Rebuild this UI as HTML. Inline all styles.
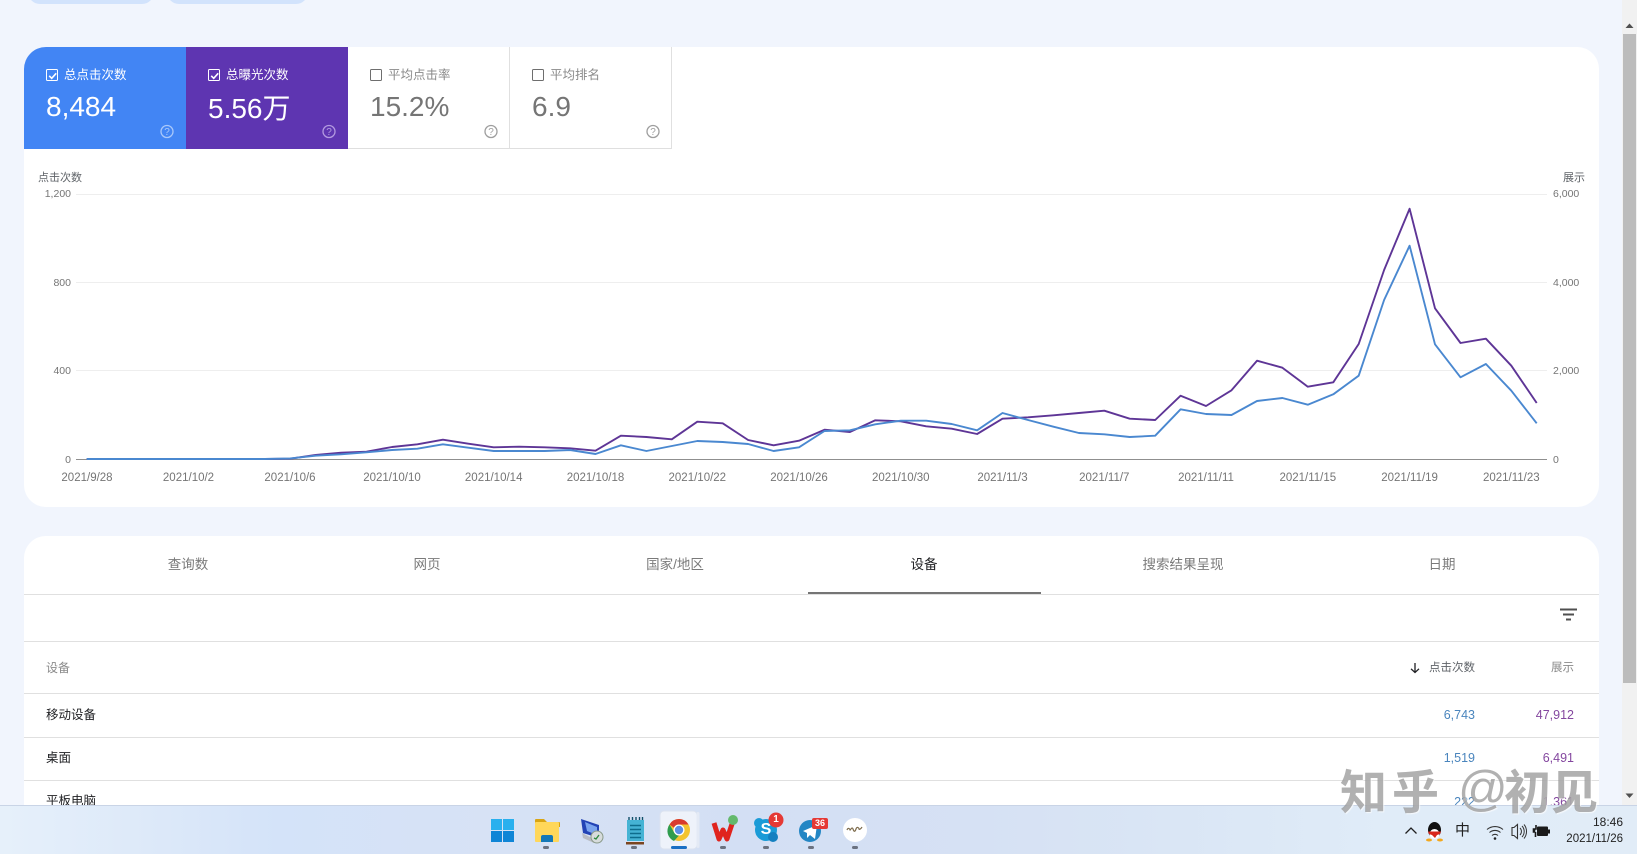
<!DOCTYPE html>
<html><head><meta charset="utf-8"><style>
html,body{margin:0;padding:0;width:1637px;height:854px;overflow:hidden;background:#f1f5fd}
body{position:relative;font-family:"Liberation Sans","Noto Sans CJK SC",sans-serif}
.a{position:absolute}
.t{position:absolute;white-space:nowrap;height:20px;line-height:20px}
.r{text-align:right}
.c{text-align:center;transform:translateX(-50%)}
.line{position:absolute;left:24px;width:1575px;height:1px;background:#e0e0e0}
.ax{font-size:10.5px;color:#757575}
.dt{font-size:11.5px;color:#757575}
.lb{font-size:12.5px}
.num{font-size:28px;height:34px;line-height:34px}
.cb{position:absolute;width:10px;height:10px;border-radius:1.5px;border:1.5px solid #fff;top:69px}
.tab{font-size:13.5px;color:#7a7a7a;top:555px}
.row{font-size:12.5px;color:#202124}
.bl{font-size:12.5px;color:#4a85bd}
.pu{font-size:12.5px;color:#84479f}
.wm{position:absolute;white-space:nowrap;height:52px;line-height:52px;top:763px;font-size:47px;font-weight:700;color:rgba(140,140,140,.68);text-shadow:1px 1px 1px rgba(255,255,255,.7);font-family:'Noto Sans CJK SC',sans-serif}
</style></head><body>

<div class="a" style="left:28px;top:-20px;width:126px;height:24px;border-radius:12px;background:#d2e3fc"></div>
<div class="a" style="left:167px;top:-20px;width:141px;height:24px;border-radius:12px;background:#d2e3fc"></div>

<!-- chart card -->
<div class="a" style="left:24px;top:47px;width:1575px;height:460px;background:#fff;border-radius:22px;overflow:hidden">
  <div class="a" style="left:0;top:0;width:162px;height:102px;background:#4285f4"></div>
  <div class="a" style="left:162px;top:0;width:162px;height:102px;background:#5e35b1"></div>
  <div class="a" style="left:324px;top:0;width:323px;border-bottom:1px solid #dfdfdf;height:101px"></div>
  <div class="a" style="left:485px;top:0;width:1px;height:102px;background:#e0e0e0"></div>
  <div class="a" style="left:647px;top:0;width:1px;height:102px;background:#e0e0e0"></div>
</div>

<!-- tiles content -->
<div class="cb" style="left:46px;border-color:#fff"></div>
<svg class="a" style="left:46px;top:69px" width="14" height="14"><path d="M3.2 6.800l2.500 2.500 4.500-5" fill="none" stroke="#fff" stroke-width="1.600"/></svg>
<div class="t lb" style="left:64px;top:65px;color:#fff">总点击次数</div>
<div class="t num" style="left:46px;top:90px;color:#fff">8,484</div>

<div class="cb" style="left:208px"></div>
<svg class="a" style="left:208px;top:69px" width="14" height="14"><path d="M3.2 6.800l2.500 2.500 4.500-5" fill="none" stroke="#fff" stroke-width="1.600"/></svg>
<div class="t lb" style="left:226px;top:65px;color:#fff">总曝光次数</div>
<div class="t num" style="left:208px;top:92px;color:#fff">5.56万</div>

<div class="cb" style="left:370px;border-color:#6e6e6e"></div>
<div class="t lb" style="left:388px;top:65px;color:#8a8a8a">平均点击率</div>
<div class="t num" style="left:370px;top:90px;color:#757575">15.2%</div>

<div class="cb" style="left:532px;border-color:#6e6e6e"></div>
<div class="t lb" style="left:550px;top:65px;color:#8a8a8a">平均排名</div>
<div class="t num" style="left:532px;top:90px;color:#757575">6.9</div>

<!-- help icons -->
<svg class="a" style="left:159px;top:123.500px" width="16" height="15"><circle cx="8" cy="7.500" r="6" fill="none" stroke="#a9c8fa" stroke-width="1.300"/><text x="8" y="11" font-size="10" text-anchor="middle" fill="#a9c8fa" font-family="Liberation Sans">?</text></svg>
<svg class="a" style="left:321px;top:123.500px" width="16" height="15"><circle cx="8" cy="7.500" r="6" fill="none" stroke="#b39ae0" stroke-width="1.300"/><text x="8" y="11" font-size="10" text-anchor="middle" fill="#b39ae0" font-family="Liberation Sans">?</text></svg>
<svg class="a" style="left:483px;top:123.500px" width="16" height="15"><circle cx="8" cy="7.500" r="6" fill="none" stroke="#9e9e9e" stroke-width="1.300"/><text x="8" y="11" font-size="10" text-anchor="middle" fill="#9e9e9e" font-family="Liberation Sans">?</text></svg>
<svg class="a" style="left:645px;top:123.500px" width="16" height="15"><circle cx="8" cy="7.500" r="6" fill="none" stroke="#9e9e9e" stroke-width="1.300"/><text x="8" y="11" font-size="10" text-anchor="middle" fill="#9e9e9e" font-family="Liberation Sans">?</text></svg>

<!-- chart -->
<svg class="a" style="left:0;top:0" width="1637" height="520">
  <g stroke="#eeeeee" stroke-width="1"><path d="M76 194.500H1547M76 282.500H1547M76 370.500H1547"/></g>
  <path d="M76 459.500H1547" stroke="#8f8f8f" stroke-width="1"/>
  <polyline fill="none" stroke="#5e3596" stroke-width="1.900" stroke-linejoin="round" points="86.7,459 112.1,459 137.6,459 163,459 188.5,459 213.9,459 239.3,459 264.8,459 290.2,458.7 315.7,455 341.1,452.7 366.5,451.7 392,447 417.4,444.3 442.9,439.7 468.3,443.7 493.7,447.3 519.2,446.7 544.6,447.3 570.1,448.3 595.5,450.7 620.9,435.7 646.4,437 671.8,439.3 697.3,421.7 722.7,423.3 748.1,440 773.6,445.3 799,440.7 824.5,429.7 849.9,432 875.3,420.3 900.8,421.3 926.2,426.3 951.7,428.7 977.1,434 1002.5,418.7 1028,417.3 1053.4,415.3 1078.9,413 1104.3,410.7 1129.7,418.7 1155.2,420 1180.6,395.7 1206,406 1231.5,390.3 1257,360.7 1282.4,367.7 1307.8,386.7 1333.3,382.3 1358.7,344 1384.1,270 1409.6,208.7 1435,308.3 1460.5,343 1485.9,338.7 1511.3,365.7 1536.7,403"/>
  <polyline fill="none" stroke="#4a88d0" stroke-width="1.900" stroke-linejoin="round" points="86.7,459 112.1,459 137.6,459 163,459 188.5,459 213.9,459 239.3,459 264.8,459 290.2,458.4 315.7,455.7 341.1,454.3 366.5,452.3 392,450 417.4,448.7 442.9,444.3 468.3,447.7 493.7,451 519.2,451 544.6,451 570.1,450 595.5,454 620.9,445.3 646.4,451 671.8,446 697.3,441 722.7,442 748.1,444 773.6,451 799,447.3 824.5,431 849.9,430.3 875.3,424.3 900.8,420.7 926.2,420.7 951.7,424 977.1,430.3 1002.5,413 1028,420 1053.4,426.7 1078.9,433 1104.3,434.3 1129.7,437 1155.2,435.7 1180.6,409.3 1206,414 1231.5,415 1257,401 1282.4,398 1307.8,404.7 1333.3,394.3 1358.7,375.7 1384.1,300 1409.6,245.7 1435,344.3 1460.5,377.3 1485.9,364 1511.3,390.7 1536.7,423.3"/>
</svg>
<div class="t" style="left:38px;top:168px;font-size:11px;color:#5f6368">点击次数</div>
<div class="t" style="right:52px;top:168px;font-size:11px;color:#5f6368">展示</div>
<div class="t ax r" style="right:1566px;top:184px">1,200</div>
<div class="t ax r" style="right:1566px;top:273px">800</div>
<div class="t ax r" style="right:1566px;top:361px">400</div>
<div class="t ax r" style="right:1566px;top:450px">0</div>
<div class="t ax" style="left:1553px;top:184px">6,000</div>
<div class="t ax" style="left:1553px;top:273px">4,000</div>
<div class="t ax" style="left:1553px;top:361px">2,000</div>
<div class="t ax" style="left:1553px;top:450px">0</div>
<div class="t dt c" style="left:87px;top:468px">2021/9/28</div>
<div class="t dt c" style="left:188.500px;top:468px">2021/10/2</div>
<div class="t dt c" style="left:290px;top:468px">2021/10/6</div>
<div class="t dt c" style="left:392px;top:468px">2021/10/10</div>
<div class="t dt c" style="left:493.700px;top:468px">2021/10/14</div>
<div class="t dt c" style="left:595.500px;top:468px">2021/10/18</div>
<div class="t dt c" style="left:697.300px;top:468px">2021/10/22</div>
<div class="t dt c" style="left:799px;top:468px">2021/10/26</div>
<div class="t dt c" style="left:900.800px;top:468px">2021/10/30</div>
<div class="t dt c" style="left:1002.500px;top:468px">2021/11/3</div>
<div class="t dt c" style="left:1104.300px;top:468px">2021/11/7</div>
<div class="t dt c" style="left:1206px;top:468px">2021/11/11</div>
<div class="t dt c" style="left:1307.800px;top:468px">2021/11/15</div>
<div class="t dt c" style="left:1409.600px;top:468px">2021/11/19</div>
<div class="t dt c" style="left:1511.300px;top:468px">2021/11/23</div>

<!-- table card -->
<div class="a" style="left:24px;top:536px;width:1575px;height:330px;background:#fff;border-radius:22px 22px 0 0"></div>
<div class="t tab c" style="left:188px">查询数</div>
<div class="t tab c" style="left:427px">网页</div>
<div class="t tab c" style="left:675px">国家/地区</div>
<div class="t tab c" style="left:924px;color:#202124">设备</div>
<div class="t tab c" style="left:1183px">搜索结果呈现</div>
<div class="t tab c" style="left:1442px">日期</div>
<div class="line" style="top:594px"></div>
<div class="a" style="left:808px;top:592px;width:233px;height:2px;background:#757575"></div>
<svg class="a" style="left:1560px;top:608px" width="18" height="14"><path d="M0 1.500H17M3 6.500H14M6 11.500H11" stroke="#4f4f4f" stroke-width="2"/></svg>
<div class="line" style="top:641px"></div>
<div class="t" style="left:46px;top:658px;font-size:12px;color:#8a8a8a">设备</div>
<svg class="a" style="left:1409px;top:662px" width="12" height="12"><path d="M6 1V10.500M2 6.800L6 10.500L10 6.800" fill="none" stroke="#202124" stroke-width="1.300"/></svg>
<div class="t" style="left:1429px;top:658px;font-size:11.500px;color:#5f6368">点击次数</div>
<div class="t r" style="right:63px;top:658px;font-size:11.500px;color:#8a8a8a">展示</div>
<div class="line" style="top:693px"></div>
<div class="t row" style="left:46px;top:704.500px">移动设备</div>
<div class="t bl r" style="right:162px;top:705px">6,743</div>
<div class="t pu r" style="right:63px;top:705px">47,912</div>
<div class="line" style="top:737px"></div>
<div class="t row" style="left:46px;top:747.500px">桌面</div>
<div class="t bl r" style="right:162px;top:748px">1,519</div>
<div class="t pu r" style="right:63px;top:748px">6,491</div>
<div class="line" style="top:780px"></div>
<div class="t row" style="left:46px;top:790.500px">平板电脑</div>
<div class="t bl r" style="right:162px;top:792px">222</div>
<div class="t pu r" style="right:63px;top:792px">1,361</div>

<!-- scrollbar -->
<div class="a" style="left:1622px;top:0;width:15px;height:805px;background:#f1f1f1"></div>
<div class="a" style="left:1623px;top:34px;width:13px;height:649px;background:#bcbcbc"></div>
<svg class="a" style="left:1623px;top:20px" width="13" height="10"><path d="M2.500 8L6.500 3.500L10.500 8Z" fill="#505050"/></svg>
<svg class="a" style="left:1623px;top:791px" width="13" height="10"><path d="M2.500 2.500H10.500L6.500 7Z" fill="#505050"/></svg>

<!-- taskbar -->
<div class="a" style="left:0;top:805px;width:1637px;height:49px;background:linear-gradient(90deg,#e6f0fa 0%,#dde9f9 9%,#d4e3f9 17%,#d7e2f5 30%,#d3dff4 45%,#d6e1f4 60%,#dae6f5 72%,#e0ecf8 85%,#e1ecf7 100%);border-top:1px solid #c9d4e6;box-sizing:border-box"></div>

<!-- watermark -->
<div class="wm" style="left:1340px">知</div>
<div class="wm" style="left:1392px">乎</div>
<div class="wm" style="left:1458px;font-family:'Liberation Sans';font-weight:400;font-size:49px">@</div>
<div class="wm" style="left:1504px">初</div>
<div class="wm" style="left:1551px">见</div>

<!-- task icons -->
<svg class="a" style="left:470px;top:806px" width="420" height="48">
  <!-- windows -->
  <rect x="21" y="13" width="11" height="11" fill="#29b0ee"/><rect x="33" y="13" width="11" height="11" fill="#29b0ee"/><rect x="21" y="25" width="11" height="11" fill="#0f85d6"/><rect x="33" y="25" width="11" height="11" fill="#0f85d6"/>
  <!-- folder -->
  <path d="M65 14a1 1 0 0 1 1-1h8l3 3h12a1 1 0 0 1 1 1v4H65z" fill="#d9a514"/>
  <rect x="65" y="16" width="24" height="20" rx="1" fill="#ffd75a"/>
  <path d="M71 36v-5a2 2 0 0 1 2-2h8a2 2 0 0 1 2 2v5z" fill="#1478b8"/>
  <!-- network pc -->
  <path d="M111 13L129 19V32L113 27z" fill="#2343b5"/><path d="M115 16L127 21V29L117 25z" fill="#7aa4ee"/>
  <path d="M112 27L124 33V37L113 32z" fill="#b9bcc4"/>
  <circle cx="127" cy="31" r="6" fill="#d7dcdc" stroke="#8a9a8a"/><path d="M124 32l2 1 3-4" fill="none" stroke="#2d8a3f" stroke-width="1.300"/>
  <!-- notepad -->
  <rect x="157" y="14" width="17" height="21" fill="#45b3d4"/>
  <path d="M160 19.500H171M160 23.500H171M160 27.500H171M160 31.500H171" stroke="#0e6d8d" stroke-width="1.500"/>
  <path d="M159 11v3M162.500 11v3M166 11v3M169.500 11v3M172.500 11v3" stroke="#10506a" stroke-width="1.400"/>
  <rect x="156" y="36" width="18" height="2.500" fill="#7a4520"/>
  <!-- chrome highlight -->
  <rect x="190" y="5" width="37" height="38" rx="4" fill="#eef2fa" stroke="#dbe2ef"/>
  <rect x="226.500" y="6" width="3" height="36" rx="1.500" fill="#e4eaf5"/>
  <rect x="201" y="40" width="16" height="3" rx="1.500" fill="#1a6fc4"/>
  <circle cx="209" cy="24" r="11" fill="#f4c430"/>
  <path d="M209 13a11 11 0 0 1 9.500 5.500H209a5.500 5.500 0 0 0-5 3.200L199.500 18.500A11 11 0 0 1 209 13z" fill="#d93a2e"/>
  <path d="M199.500 18.500L204.500 27a5.500 5.500 0 0 0 4.500 2.500L204 35A11 11 0 0 1 199.500 18.500z" fill="#2f9c4e"/>
  <circle cx="209" cy="24" r="5.500" fill="#fff"/><circle cx="209" cy="24" r="4.200" fill="#5b8fe6"/>
  <!-- wps -->
  <path d="M244 17L249 33L253 24L257 33L263 15" fill="none" stroke="#e0241e" stroke-width="5" stroke-linejoin="round"/>
  <circle cx="263" cy="14" r="5" fill="#63b96c"/>
  <!-- skype -->
  <circle cx="296" cy="24" r="11" fill="#1a9bd7"/><circle cx="289" cy="17" r="5" fill="#1a9bd7"/><circle cx="303" cy="31" r="5" fill="#1480c0"/>
  <circle cx="306" cy="14" r="7.500" fill="#e53935"/>
  <!-- telegram -->
  <circle cx="340" cy="25" r="11" fill="#2386c4"/>
  <path d="M333 25L347 19L345 33L340 29L337 32V27z" fill="#fff"/>
  <rect x="342" y="12" width="16" height="11" rx="2" fill="#e53935"/>
  <!-- last -->
  <circle cx="385" cy="24" r="12" fill="#fff"/>
  <path d="M377 24c1-3 3-1 3 0s2-4 3-1 2 3 3 0 3-1 3 0 2 0 3-2" fill="none" stroke="#7c6a4a" stroke-width="1.200"/>
  <!-- dots -->
  <g fill="#6b7280"><rect x="73" y="40" width="6" height="3" rx="1.500"/><rect x="161" y="40" width="6" height="3" rx="1.500"/><rect x="250" y="40" width="6" height="3" rx="1.500"/><rect x="293" y="40" width="6" height="3" rx="1.500"/><rect x="338" y="40" width="6" height="3" rx="1.500"/><rect x="382" y="40" width="6" height="3" rx="1.500"/></g>
</svg>
<div class="t" style="left:770px;top:810px;width:12px;text-align:center;font-size:10px;font-weight:700;color:#fff">1</div>
<div class="t" style="left:812px;top:813px;width:16px;text-align:center;font-size:9px;font-weight:700;color:#fff">36</div>
<div class="t" style="left:759px;top:820px;width:14px;text-align:center;font-size:16px;font-weight:700;color:#fff">S</div>

<!-- tray -->
<svg class="a" style="left:1400px;top:815px" width="170" height="32">
  <path d="M5.500 18.500L11 13L16.500 18.500" fill="none" stroke="#202020" stroke-width="1.300"/>
  <ellipse cx="34.500" cy="15" rx="6.500" ry="8" fill="#111"/>
  <ellipse cx="34.500" cy="19" rx="5" ry="5" fill="#fff"/>
  <path d="M28 16.500h13l-1 2.500-3 1-2 3-3-3-3-1z" fill="#d8261c"/>
  <ellipse cx="29" cy="25" rx="3" ry="1.500" fill="#f3a81e"/><ellipse cx="40" cy="25" rx="3" ry="1.500" fill="#f3a81e"/>
  <path d="M87 14.500a12.500 12.500 0 0 1 16 0M89.500 17.500a8.500 8.500 0 0 1 11 0M92 20.500a4.500 4.500 0 0 1 6 0" fill="none" stroke="#333" stroke-width="1.100"/><circle cx="95" cy="23.500" r="1.300" fill="#222"/>
  <path d="M112 12.500h2l3.500-3v14l-3.500-3h-2z" fill="none" stroke="#333" stroke-width="1.100"/>
  <path d="M120 13a5 5 0 0 1 0 7M122 11a8 8 0 0 1 0 11M124 9.500a11 11 0 0 1 0 14" fill="none" stroke="#333" stroke-width="1"/>
  <rect x="137" y="11.500" width="11" height="9.500" rx="1" fill="#1a1a1a"/><rect x="148" y="14.500" width="2" height="4" fill="#1a1a1a"/>
  <path d="M136 10v4h-1.500v3h-1v-3H135M135.500 17v5" stroke="#1a1a1a" stroke-width="1.600" fill="none"/>
</svg>
<div class="t" style="left:1455px;top:821px;font-size:15px;color:#222">中</div>
<div class="t r" style="right:14px;top:812px;font-size:12px;color:#222">18:46</div>
<div class="t r" style="right:14px;top:828.500px;font-size:11.500px;color:#222">2021/11/26</div>
</body></html>
